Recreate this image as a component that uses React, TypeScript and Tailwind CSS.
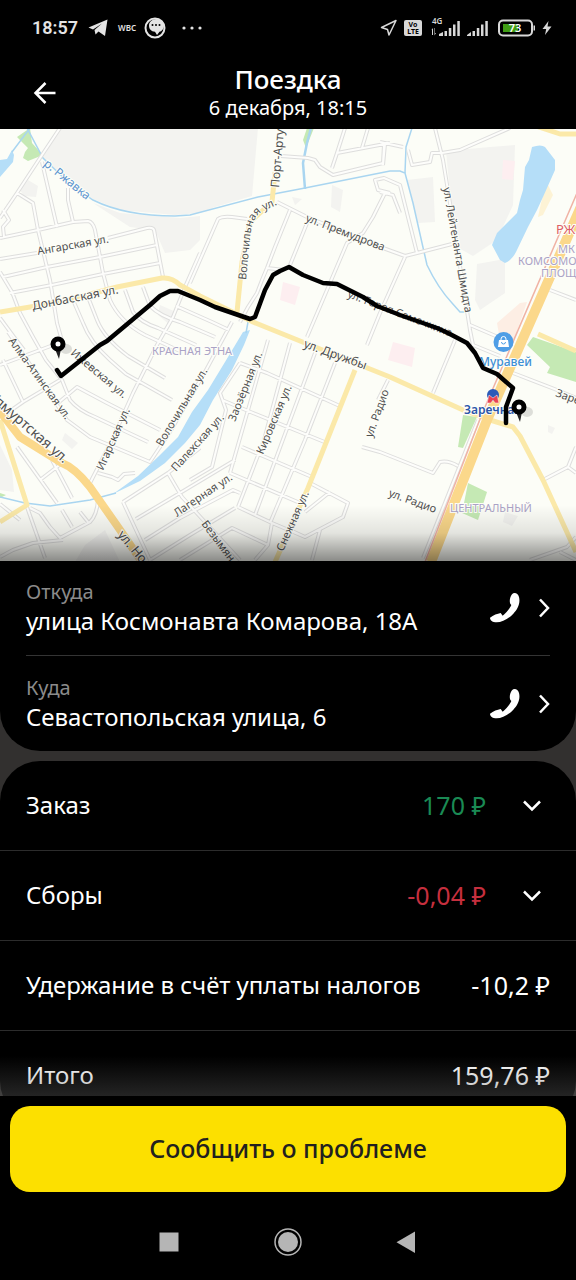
import type { ReactNode } from "react";

/**
 * Minor streets of the map. Drawn twice: once as the casing, once as the fill.
 */
const STREETS = [
  "M60 128 40 158 17 193 0 218",
  "M17 193 33 203 38 230 50 280 57 323 64 348",
  "M3 210 9 220 3 227 4 237",
  "M0 238 38 230 73 222 88 221Q93 222 95 230L103 273 110 300Q120 322 145 335L182 352",
  "M42 162 57 227",
  "M68 188 68 200 73 222",
  "M0 259 37 253M108 238 147 228Q153 227 154 230L163 277",
  "M3 277 47 267 100 257 157 245",
  "M10 293 52 285 103 274 160 263",
  "M0 272 12 292 20 313 33 337 46 360 62 380 70 400Q78 410 95 417L148 442",
  "M0 318 14 337 24 350",
  "M73 300 83 323Q90 342 110 360L126 374 172 400",
  "M88 297 97 320Q104 338 128 356L165 378",
  "M125 290 133 312Q140 322 158 328L196 345",
  "M143 287 150 306Q160 316 180 322L215 337",
  "M176 306 212 322 229 330",
  "M200 253 185 287 173 317 157 345 133 393 112 440 90 483",
  "M190 283 218 219Q222 216 232 217L247 219",
  "M232 322 205 372 170 432 150 462 90 437 67 420 44 385 8 332",
  "M0 365 40 350 56 344M0 418 23 402 60 380M3 360 23 402",
  "M58 403 77 387 107 403 160 430",
  "M281 156 308 158 315 160 320 167 333 175 383 163 384 145",
  "M332 168 337 153 345 128M337 153 390 143M362 148 368 128",
  "M277 202 307 217 383 248 405 256 417 253 452 244",
  "M290 210 275 247 267 268 262 280 257 293 248 307 240 322",
  "M307 223 290 265M267 268 284 270",
  "M385 193 373 217 363 233 347 243 327 290 307 337",
  "M390 193 378 190 375 180 384 178 400 185 417 253M380 192 393 195 400 213",
  "M405 257 380 313 367 345",
  "M435 128 443 160 456 240 470 330 473 345",
  "M380 142 403 147M385 144 383 165M408 150 412 165 430 162 432 153 442 153 460 150 510 128",
  "M455 340 433 393M473 345 500 356",
  "M550 290 576 300M513 373 557 390 576 398",
  "M543 480 568 467 576 447M568 467 576 473",
  "M380 452 433 473 440 462Q448 460 458 466",
  "M478 420 423 558",
  "M530 560 567 547 576 537M576 560 560 552",
  "M388 380 378 400M362 447 380 452",
  "M240 363 267 373 342 407",
  "M222 400 253 413 327 443",
  "M242 447 312 477",
  "M230 473 300 503",
  "M238 507 272 523 305 537 343 517 348 503 310 483",
  "M268 340 230 473M290 343 264 440 238 507M315 353 255 515M335 363 305 440 270 523",
  "M240 363 220 393 226 410 212 467 190 480",
  "M272 523 268 545 255 560M305 537 290 530M320 530 312 560M305 512 330 492",
  "M123 502 168 473 200 448M123 502 150 560M136 519 185 490 235 460",
  "M168 473 182 497 240 560M145 540 180 518 233 490 240 493",
  "M150 560 190 535 235 508M180 560 232 528 268 545",
  "M27 507 45 558M17 447 57 503M40 480 62 463M52 460 72 498",
  "M30 508 40 513 50 527 60 538 90 522Q97 515 98 500",
  "M0 557 13 550 33 543 63 540M62 510 72 527M80 512 88 522M0 504 20 520",
  "M98 473 112 477 118 480 124 474 135 473",
  "M505 340 470 325",
].join("");

type MapLabelProps = {
  x: number;
  y: number;
  angle?: number;
  size?: number;
  className?: string;
  children: ReactNode;
};

const MapLabel = ({
  x,
  y,
  angle = 0,
  size = 12,
  className = "fill-[#505050]",
  children,
}: MapLabelProps) => (
  <text
    x={x}
    y={y}
    fontSize={size}
    transform={`rotate(${angle} ${x} ${y})`}
    stroke="#fdfef8"
    strokeWidth="2"
    paintOrder="stroke"
    className={className}
  >
    {children}
  </text>
);

const Pin = ({ x, y }: { x: number; y: number }) => (
  <g>
    <ellipse cx={x + 8} cy={y + 5} rx="6" ry="5" fill="#000" opacity="0.12" />
    <path d={`M${x - 3} ${y + 5}L${x + 1} ${y + 15} ${x + 3} ${y + 5}Z`} fill="#222" />
    <circle cx={x} cy={y} r="5" fill="#fff" stroke="#000" strokeWidth="5" />
  </g>
);

/**
 * Map with the route of the trip.
 */
const RouteMap = () => (
  <div className="relative aspect-[4/3] w-full overflow-hidden bg-[#fcfdf7]">
    <svg
      viewBox="0 129 576 432"
      className="block h-full w-full"
      preserveAspectRatio="xMidYMid slice"
      role="img"
      aria-label="Маршрут поездки"
    >
      {/* built-up areas */}
      <g fill="#f3f3f0">
        <path d="M60 128H258L252 196 215 207 200 213 175 215 120 210 93 199 70 184 43 157Z" />
        <path d="M93 203 120 213 180 218 200 216V240L190 250 165 253 155 230 130 227Z" />
        <path d="M28 180 38 186 36 197 24 196 20 190Z" />
        <path d="M446 151 490 147 515 145 513 205 497 240 473 256 455 246Z" />
        <path d="M407 180 433 177 435 222 418 223Z" />
        <path d="M477 264 505 259 505 293 480 310 475 300Z" />
        <path d="M332 185 343 190 340 212 331 207ZM292 197 302 199 295 205Z" />
        <path d="M0 445 12 470 14 492 0 490ZM65 433 78 443 72 449 62 440Z" />
        <path d="M75 562 85 545 105 530 120 562ZM505 512 518 516 512 526 503 522Z" />
        <path d="M160 305 176 312 170 325 158 315ZM548 425 555 428 552 434 548 432Z" />
      </g>
      <g fill="#fdeef0">
        <path d="M283 282 300 287 295 305 280 300Z" />
        <path d="M393 342 415 348 412 367 388 360Z" />
        <path d="M503 160 515 161 513 180 502 179Z" />
      </g>
      <path d="M497 323 520 303 527 302 513 343 500 340Z" fill="#fdeee4" />
      <path d="M547 183 553 195 543 215 538 217 541 203Z" fill="#fdf3d5" />
      <g fill="#c5e9b4">
        <path d="M17 137 30 128 32 143 40 152 43 155 28 161 23 158 25 152 28 148Z" />
        <path d="M303 140 307 128H314L306 148Z" />
        <path d="M527 345 533 337 576 352V382L547 373 550 367Z" />
        <path d="M463 415 477 417 463 448 458 447Z" />
        <path d="M468 483 487 492 478 520 462 513Z" />
        <path d="M0 493 6 495 0 498Z" />
      </g>

      {/* water */}
      <g fill="#b5def8">
        <path d="M532 147Q541 144 545 147L555 160 555 170 543 197 537 210 528 227 516 252Q512 260 505 263L500 260 492 245 497 233 517 213 520 200 523 190 525 167 529 160Z" />
        <path d="M0 160 7 159 12 150 14 155 13 162 0 177Z" />
        <path d="M243 332 250 330 244 345 232 370 213 400 200 425 185 443 165 463 140 481 113 494 138 476 160 455 178 437 192 412 208 390 225 362Z" />
      </g>
      <g fill="none" stroke="#a9d5f0" strokeWidth="1.5">
        <path d="M12 152 30 128M27 128 43 158 70 184 93 200Q125 216 175 216L190 215 258 197 305 188 390 171 400 171 405 173 413 203 422 243 427 265Q438 288 452 303L460 312 466 312" />
        <path d="M405 173 406 147 412 128" />
        <path d="M305 189 303 163 307 143 311 128" strokeWidth="2.5" />
        <path d="M0 497 25 503 50 506 90 500 116 493M248 322 246 333" />
      </g>

      {/* streets */}
      <path d={STREETS} fill="none" stroke="#dededd" strokeWidth="4" strokeLinejoin="round" />
      <path d={STREETS} fill="none" stroke="#fdfdfb" strokeWidth="2" strokeLinejoin="round" />
      <g fill="none" stroke="#fbe9a9" strokeWidth="5" strokeLinejoin="round">
        <path d="M0 312 60 302 117 287 162 278Q172 277 180 285L200 296 253 322 305 343 390 377 463 410 490 420 513 427 520 436 543 480 576 552" />
        <path d="M275 172 272 202 250 222 242 262 237 312" />
        <path d="M355 370 308 488 275 562" />
        <path d="M0 420 27 505 0 522" />
        <path d="M530 124 560 134H576M538 334 576 351" />
      </g>
      <g fill="none" stroke="#fbd88b" strokeLinejoin="round">
        <path d="M-5 405 20 437 62 463Q75 468 90 487L118 527 142 562" strokeWidth="8" />
        <path d="M583 202 487 420 431 562" strokeWidth="10" />
      </g>
      <path d="M577 193 482 414 425 562" fill="none" stroke="#f0b3a5" strokeWidth="1.5" />

      {/* names */}
      <g className="font-['Noto_Sans',sans-serif]">
        <MapLabel x={38} y={255} angle={-10} size={11}>Ангарская ул.</MapLabel>
        <MapLabel x={33} y={310} angle={-11}>Донбасская ул.</MapLabel>
        <MapLabel x={43} y={165} angle={39} className="fill-[#5b93cf]">р. Ржавка</MapLabel>
        <MapLabel x={279} y={188} angle={-85}>Порт-Арту</MapLabel>
        <path id="volochilnaya" d="M246 280 250 238Q252 217 263 211L290 199" fill="none" />
        <text fontSize="11" stroke="#fdfef8" strokeWidth="2" paintOrder="stroke" className="fill-[#505050]">
          <textPath href="#volochilnaya">Волочильная ул.</textPath>
        </text>
        <MapLabel x={305} y={221} angle={21} size={11}>ул. Премудрова</MapLabel>
        <MapLabel x={443} y={188} angle={80} size={11}>ул. Лейтенанта Шмидта</MapLabel>
        <MapLabel x={556} y={234} size={13} className="fill-[#dd5f66]">РЖ</MapLabel>
        <MapLabel x={558} y={253} size={11} className="fill-[#aaa2c6]">МК</MapLabel>
        <MapLabel x={518} y={265} size={11} className="fill-[#aaa2c6]">КОМСОМО</MapLabel>
        <MapLabel x={541} y={277} size={11} className="fill-[#aaa2c6]">ПЛОЩ</MapLabel>
        <MapLabel x={152} y={355} size={11} className="fill-[#aaa2c6]">КРАСНАЯ ЭТНА</MapLabel>
        <MapLabel x={303} y={347} angle={20}>ул. Дружбы</MapLabel>
        <MapLabel x={347} y={297} angle={21} size={11}>ул. Героя Самочкина</MapLabel>
        <MapLabel x={8} y={341} angle={54} size={11}>Алма-Атинская ул.</MapLabel>
        <MapLabel x={70} y={354} angle={40} size={11}>Ижевская ул.</MapLabel>
        <MapLabel x={-12} y={398} angle={41} size={14}>Удмуртская ул.</MapLabel>
        <MapLabel x={103} y={471} angle={-66} size={11}>Игарская ул.</MapLabel>
        <MapLabel x={162} y={447} angle={-59} size={11}>Волочильная ул.</MapLabel>
        <MapLabel x={176} y={472} angle={-48} size={11}>Палехская ул.</MapLabel>
        <MapLabel x={177} y={517} angle={-34} size={11}>Лагерная ул.</MapLabel>
        <MapLabel x={235} y={422} angle={-68} size={11}>Заозёрная ул.</MapLabel>
        <MapLabel x={263} y={455} angle={-67} size={11}>Кировская ул.</MapLabel>
        <MapLabel x={372} y={438} angle={-70} size={11}>ул. Радио</MapLabel>
        <MapLabel x={388} y={496} angle={20} size={11}>ул. Радио</MapLabel>
        <MapLabel x={283} y={552} angle={-66} size={11}>Снежная ул.</MapLabel>
        <MapLabel x={201} y={524} angle={53} size={11}>Безымян</MapLabel>
        <MapLabel x={117} y={535} angle={50} size={13}>ул. Но</MapLabel>
        <MapLabel x={555} y={396} angle={20} size={11}>Заре</MapLabel>
        <MapLabel x={450} y={512} size={11} className="fill-[#aaa2c6]">ЦЕНТРАЛЬНЫЙ</MapLabel>
        <MapLabel x={479} y={366} className="fill-[#3d8fd6] font-medium">Муравей</MapLabel>
        <MapLabel x={464} y={414} className="fill-[#2b55a8] font-semibold">Заречная</MapLabel>
      </g>

      {/* shopping mall */}
      <circle cx="503.5" cy="342" r="10" fill="#4f9ee6" />
      <path d="M499 340H508L509 347H498Z" fill="#fff" />
      <path d="M501 341V339A2.5 2.5 0 0 1 506 339V341" fill="none" stroke="#fff" />
      <path d="M501.5 342A2 2 0 0 0 505.5 342" fill="none" stroke="#4f9ee6" />

      {/* metro station */}
      <circle cx="493" cy="395" r="6" fill="#2c5ab8" />
      <path d="M487 403 489 395 493 398 497 395 499 403H495L493 400 491 403Z" fill="#e84353" stroke="#fff" strokeWidth="0.5" />

      <path
        d="M57 370 61 376 100 345 107 341 150 305 160 296 170 291 178 291 200 300 215 307 250 319 255 317 265 290 273 275 280 271 289 267 303 275 323 283 337 284 363 297 377 306 400 315 437 328 448 333 467 343 475 353 483 368 497 374 513 388 506 407 506 423"
        fill="none"
        stroke="#000"
        strokeWidth="4.5"
        strokeLinecap="round"
        strokeLinejoin="round"
      />
      <Pin x={58} y={344} />
      <Pin x={519} y={407} />
    </svg>
    <div className="absolute inset-x-0 bottom-0 h-14 bg-linear-to-b from-transparent via-black/10 to-black/45" />
  </div>
);

const StatusBar = () => (
  <div className="flex h-14 items-center justify-between pr-6 pl-8 text-[#e4e4e4]">
    <div className="flex items-center">
      <span className="font-[Roboto,sans-serif] text-lg font-semibold">18:57</span>
      <svg viewBox="0 0 20 18" className="ml-2.5 h-[18px] w-5" fill="currentColor">
        <path d="M0.5 8.5 19.5 0.5 17 17 10.5 12.5 7.5 15.5 6.5 11 14 4.5 5 10.5Z" />
      </svg>
      <span className="ml-2.5 font-['Noto_Sans',sans-serif] text-[8px] font-semibold">WBC</span>
      <svg viewBox="0 0 22 22" className="ml-2 size-[22px]">
        <circle cx="11" cy="11" r="9.5" fill="none" stroke="currentColor" strokeWidth="2" />
        <path
          d="M12.5 2C17 2 20 5 20 8.5C20 12 17.5 14.5 15.5 14.8L13 18 11 14.8C7 14.5 5 12 5 8.5C5 5 8 2 12.5 2Z"
          fill="currentColor"
        />
        <g fill="#000">
          <circle cx="8.5" cy="8" r="1" />
          <circle cx="12" cy="8" r="1" />
          <circle cx="15.5" cy="8" r="1" />
        </g>
      </svg>
      <svg viewBox="0 0 20 4" className="ml-4 h-1 w-5" fill="currentColor">
        <circle cx="2" cy="2" r="1.6" />
        <circle cx="10" cy="2" r="1.6" />
        <circle cx="18" cy="2" r="1.6" />
      </svg>
    </div>

    <div className="flex items-center font-['Noto_Sans',sans-serif] text-[#d8d8d8]">
      <svg viewBox="0 0 18 18" className="size-[18px]" fill="none" stroke="currentColor" strokeWidth="1.5" strokeLinejoin="round">
        <path d="M1.5 8.5 16 1.5 9 16 7.5 10.5Z" />
      </svg>
      <div className="ml-1.5 flex h-4 w-[18px] flex-col items-center justify-center rounded-xs bg-[#d8d8d8] text-[7px] leading-[7px] font-bold text-black">
        <span>Vo</span>
        <span>LTE</span>
      </div>
      <svg viewBox="0 0 32 20" className="ml-2 h-5 w-8 overflow-visible" fill="currentColor">
        <text x="2" y="6" fontSize="8" fontWeight="600">4G</text>
        <path d="M1.5 12 3 10V17H2V12ZM5 10V15H6L4.5 17.5V10Z" />
        <path d="M9 16 13 14V18H9ZM14.5 13H17V18H14.5ZM18.8 10H21.3V18H18.8ZM23 6.5H25.5V18H23ZM27.3 3H29.8V18H27.3Z" />
      </svg>
      <svg viewBox="0 0 24 20" className="ml-1 h-5 w-6" fill="currentColor">
        <path d="M1 17 5 14V18H1ZM6.5 13H9V18H6.5ZM10.8 10H13.3V18H10.8ZM15 6.5H17.5V18H15ZM19.3 3H21.8V18H19.3Z" />
      </svg>
      <svg viewBox="0 0 38 18" className="ml-2 h-[18px] w-[38px]">
        <rect x="1" y="1.5" width="33" height="15" rx="4" fill="none" stroke="currentColor" strokeWidth="2" />
        <rect x="5" y="5" width="15" height="8" fill="#3f9d14" />
        <path d="M35.5 6.5H37V11.5H35.5Z" fill="currentColor" />
        <text x="17" y="13" fontSize="11" fontWeight="600" textAnchor="middle" fill="#fff">73</text>
      </svg>
      <svg viewBox="0 0 10 16" className="ml-1.5 h-4 w-2.5" fill="currentColor">
        <path d="M6.5 1 0.5 9H4.2L3 15 9.5 6.5H5.5Z" />
      </svg>
    </div>
  </div>
);

const Header = () => (
  <header className="grid h-[73px] grid-cols-[1fr_auto_1fr] items-center px-8">
    <button type="button" aria-label="Назад" className="size-6 justify-self-start">
      <svg viewBox="0 0 24 24" fill="none" stroke="currentColor" strokeWidth="2.5">
        <path d="M23.5 12H4M13.5 2 3.5 12 13.5 22" />
      </svg>
    </button>
    <div className="text-center">
      <h1 className="text-[26px] leading-[30px] font-medium">Поездка</h1>
      <p className="text-xl leading-7">6 декабря, 18:15</p>
    </div>
  </header>
);

const AddressRow = ({ label, address }: { label: string; address: string }) => (
  <button type="button" className="flex h-[95px] w-full items-center text-left">
    <span className="min-w-0 flex-1 pb-0.5">
      <span className="block text-xl leading-7 text-[#8b8b8b]">{label}</span>
      <span className="block text-2xl leading-[30px]">{address}</span>
    </span>
    <svg viewBox="0 0 90 90" className="size-[30px]" fill="currentColor">
      <path d="M66 4C72-3 84 0 87 12C92 32 82 50 70 62C56 77 36 88 20 88C8 88 0 82 0 74C10 66 22 62 32 60L38 68C48 60 60 46 64 36C57 32 58 14 66 4Z" />
    </svg>
    <svg viewBox="0 0 12 20" className="ml-[18px] h-5 w-3" fill="none" stroke="currentColor" strokeWidth="2.5">
      <path d="M2 1.5 10 10 2 18.5" />
    </svg>
  </button>
);

type CostRowProps = {
  title: string;
  price: string;
  priceClassName?: string;
  expandable?: boolean;
};

const CostRow = ({ title, price, priceClassName, expandable }: CostRowProps) => {
  const content = (
    <>
      <span className="flex-1 pb-0.5 text-2xl">{title}</span>
      <span className={`text-[25px] ${priceClassName ?? ""}`}>{price}</span>
      {expandable && (
        <svg viewBox="0 0 20 12" className="mr-2 ml-9 h-3 w-5" fill="none" stroke="currentColor" strokeWidth="2.5">
          <path d="M2 1.5 10 9.5 18 1.5" />
        </svg>
      )}
    </>
  );

  return (
    <li className="h-[90px]">
      {expandable ? (
        <button type="button" aria-expanded="false" className="flex h-full w-full items-center px-6.5 text-left">
          {content}
        </button>
      ) : (
        <div className="flex h-full items-center px-6.5">{content}</div>
      )}
    </li>
  );
};

const SystemNav = () => (
  <nav className="flex h-22 items-center justify-center gap-[91px] pt-3 text-[#b5b5b5]">
    <button type="button" aria-label="Недавние" className="size-7">
      <svg viewBox="0 0 28 28" fill="currentColor">
        <path d="M4.5 4.5H23.5V23.5H4.5Z" />
      </svg>
    </button>
    <button type="button" aria-label="Домой" className="size-7">
      <svg viewBox="0 0 28 28" fill="currentColor">
        <circle cx="14" cy="14" r="13" fill="none" stroke="currentColor" strokeWidth="1.5" />
        <circle cx="14" cy="14" r="10" />
      </svg>
    </button>
    <button type="button" aria-label="Назад" className="size-7">
      <svg viewBox="0 0 28 28" fill="currentColor">
        <path d="M22 3.5V25L3.5 14.2Z" />
      </svg>
    </button>
  </nav>
);

const App = () => (
  <div className="flex h-screen flex-col bg-black font-['Noto_Sans',sans-serif] text-white">
    <StatusBar />
    <Header />

    <main className="relative min-h-0 flex-1 overflow-hidden">
      <div className="h-full overflow-y-auto bg-[#32302f] [scrollbar-width:none]">
        <RouteMap />
        <section className="divide-y divide-[#343434] rounded-b-[40px] bg-black px-6.5">
          <AddressRow label="Откуда" address="улица Космонавта Комарова, 18А" />
          <AddressRow label="Куда" address="Севастопольская улица, 6" />
        </section>
        <ul className="mt-2.5 divide-y divide-[#2c2c2c] rounded-[40px] bg-black">
          <CostRow title="Заказ" price="170 ₽" priceClassName="text-[#1a8a54]" expandable />
          <CostRow title="Сборы" price="-0,04 ₽" priceClassName="text-[#c62f3e]" expandable />
          <CostRow title="Удержание в счёт уплаты налогов" price="-10,2 ₽" />
          <CostRow title="Итого" price="159,76 ₽" />
        </ul>
      </div>
      <div className="pointer-events-none absolute inset-x-0 bottom-0 h-10 bg-linear-to-b from-transparent to-[#5a5a5a]/40" />
    </main>

    <footer className="px-2.5 pt-2.5">
      <button type="button" className="h-[86px] w-full rounded-[20px] bg-[#fce000] text-[25px] font-medium text-[#21201f]">
        Сообщить о проблеме
      </button>
    </footer>
    <SystemNav />
  </div>
);

export default App;
